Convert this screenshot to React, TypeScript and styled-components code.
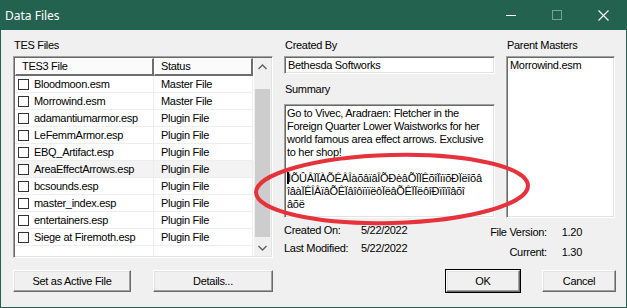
import styled, { createGlobalStyle } from "styled-components";

const GREEN = "#23624f";

const GlobalStyle = createGlobalStyle`
  body {
    margin: 0;
    background: #fff;
  }
  * {
    box-sizing: border-box;
  }
`;

type EspFile = { name: string; status: string; hover?: boolean };

const files: EspFile[] = [
  { name: "Bloodmoon.esm", status: "Master File" },
  { name: "Morrowind.esm", status: "Master File" },
  { name: "adamantiumarmor.esp", status: "Plugin File" },
  { name: "LeFemmArmor.esp", status: "Plugin File" },
  { name: "EBQ_Artifact.esp", status: "Plugin File" },
  { name: "AreaEffectArrows.esp", status: "Plugin File", hover: true },
  { name: "bcsounds.esp", status: "Plugin File" },
  { name: "master_index.esp", status: "Plugin File" },
  { name: "entertainers.esp", status: "Plugin File" },
  { name: "Siege at Firemoth.esp", status: "Plugin File" },
];

const summary =
  "Go to Vivec, Aradraen: Fletcher in the\n" +
  "Foreign Quarter Lower Waistworks for her\n" +
  "world famous area effect arrows. Exclusive\n" +
  "to her shop!\n\n";

const garbled =
  "ÌÕÛÂÏÏÀÕÊÂÎàõâïâÎÕÐèâÕÏÏÊõîÏïïõÐÏëîõâ\n" +
  "îâàÏÊÎÂïâÕÊÏâîôïïïëôÏëâÕÊÏÏëôîÐïîïîâõî\n" +
  "âõë";

function App() {
  return (
    <>
      <GlobalStyle />
      <Window>
        <TitleBar>
          <Title>Data Files</Title>
          <Controls>
            <ControlButton>
              <svg width="10" height="10" viewBox="0 0 10 10">
                <line x1="0" y1="5.5" x2="10" y2="5.5" stroke="#fff" strokeWidth="1" />
              </svg>
            </ControlButton>
            <ControlButton $disabled>
              <svg width="10" height="10" viewBox="0 0 10 10">
                <rect x="0.5" y="0.5" width="9" height="9" fill="none" stroke="#fff" strokeWidth="1" />
              </svg>
            </ControlButton>
            <ControlButton>
              <svg width="11" height="11" viewBox="0 0 11 11">
                <path d="M0.5 0.5 L10.5 10.5 M10.5 0.5 L0.5 10.5" stroke="#fff" strokeWidth="1.1" />
              </svg>
            </ControlButton>
          </Controls>
        </TitleBar>

        <Body>
          <Panels>
            <Label>TES Files</Label>
            <Label>Created By</Label>
            <Label>Parent Masters</Label>

            <ListBox>
              <ListTable>
                <HeaderRow>
                  <HeaderCell>TES3 File</HeaderCell>
                  <HeaderCell>Status</HeaderCell>
                </HeaderRow>
                {files.map((f) => (
                  <Row key={f.name} $hover={f.hover}>
                    <NameCell>
                      <Checkbox />
                      {f.name}
                    </NameCell>
                    <StatusCell>{f.status}</StatusCell>
                  </Row>
                ))}
                <Row>
                  <NameCell />
                  <StatusCell />
                </Row>
              </ListTable>
              <Scrollbar>
                <ScrollArrow>
                  <svg width="9" height="6" viewBox="0 0 9 6">
                    <polyline points="0.5,5 4.5,1 8.5,5" fill="none" stroke="#606060" strokeWidth="1.4" />
                  </svg>
                </ScrollArrow>
                <Track>
                  <Thumb />
                </Track>
                <ScrollArrow>
                  <svg width="9" height="6" viewBox="0 0 9 6">
                    <polyline points="0.5,1 4.5,5 8.5,1" fill="none" stroke="#606060" strokeWidth="1.4" />
                  </svg>
                </ScrollArrow>
              </Scrollbar>
            </ListBox>

            <MiddleStack>
              <TextField>Bethesda Softworks</TextField>
              <SubLabel>Summary</SubLabel>
              <SummaryBox>
                {summary}
                <Caret />
                {garbled}
              </SummaryBox>
            </MiddleStack>

            <MastersBox>Morrowind.esm</MastersBox>

            <InfoRow>
              <DateGrid>
                <span>Created On:</span>
                <span>5/22/2022</span>
                <span>Last Modified:</span>
                <span>5/22/2022</span>
              </DateGrid>
              <VersionGrid>
                <VersionLabel>File Version:</VersionLabel>
                <span>1.20</span>
                <VersionLabel>Current:</VersionLabel>
                <span>1.30</span>
              </VersionGrid>
            </InfoRow>
          </Panels>

          <ButtonBar>
            <Button $width={118}>Set as Active File</Button>
            <Button $width={120}>Details...</Button>
            <Spacer />
            <Button $width={74} $default>
              OK
            </Button>
            <Button $width={74}>Cancel</Button>
          </ButtonBar>
        </Body>

        {/* red marker drawn over the screenshot */}
        <Annotation viewBox="0 0 627 308">
          <ellipse
            cx="391"
            cy="189"
            rx="136"
            ry="34"
            transform="rotate(-1.5 391 189)"
            fill="none"
            stroke="#e5323b"
            strokeWidth="4"
          />
        </Annotation>
      </Window>
    </>
  );
}

export default App;

const Window = styled.div`
  position: relative;
  width: 627px;
  height: 308px;
  border: 1px solid ${GREEN};
  border-top: none;
  display: flex;
  flex-direction: column;
  background: #f0f0f0;
  font-family: "Liberation Sans", Arial, sans-serif;
  font-size: 11px;
  letter-spacing: -0.3px;
  color: #000;
  overflow: hidden;
`;

const TitleBar = styled.div`
  height: 30px;
  flex: none;
  display: flex;
  align-items: center;
  background: ${GREEN};
  color: #fff;
  padding-left: 4px;
`;

const Title = styled.div`
  flex: 1;
  font-family: "Noto Sans", "Liberation Sans", sans-serif;
  font-size: 12px;
  letter-spacing: 0;
`;

const Controls = styled.div`
  display: flex;
  height: 100%;
`;

const ControlButton = styled.div<{ $disabled?: boolean }>`
  width: 46px;
  height: 100%;
  display: flex;
  align-items: center;
  justify-content: center;
  opacity: ${(p) => (p.$disabled ? 0.4 : 1)};
`;

const Body = styled.div`
  flex: 1;
  display: flex;
  flex-direction: column;
  padding: 9px 10px 0 12px;
`;

const Panels = styled.div`
  display: grid;
  grid-template-columns: 260px 211px 109px;
  grid-template-rows: 13px 162px 36px;
  column-gap: 11px;
  row-gap: 4px;
`;

const Label = styled.div`
  line-height: 13px;
  padding-left: 1px;
`;

const sunken = `
  border: 1px solid;
  border-color: #a0a0a0 #ffffff #ffffff #a0a0a0;
  box-shadow: inset 1px 1px #696969, inset -1px -1px #e3e3e3;
  background: #fff;
`;

const ListBox = styled.div`
  ${sunken}
  grid-row: 2 / 4;
  grid-column: 1;
  display: flex;
  padding: 1px;
  overflow: hidden;
`;

const ListTable = styled.div`
  flex: 1;
  display: flex;
  flex-direction: column;
  overflow: hidden;
`;

const HeaderRow = styled.div`
  display: grid;
  grid-template-columns: 139px 99px;
  height: 18px;
  flex: none;
`;

const HeaderCell = styled.div`
  background: #fbfbfb;
  border-top: 1px solid #fff;
  border-left: 1px solid #fff;
  border-right: 2px solid #6d6d6d;
  border-bottom: 2px solid #6d6d6d;
  padding-left: 6px;
  line-height: 15px;
`;

const Row = styled.div<{ $hover?: boolean }>`
  display: grid;
  grid-template-columns: 139px 99px;
  height: 17px;
  flex: none;
  background: ${(p) => (p.$hover ? "#f3f3f3" : "#fff")};
`;

const NameCell = styled.div`
  display: flex;
  align-items: center;
  gap: 5px;
  padding-left: 3px;
  border-right: 1px solid #ededed;
  border-bottom: 1px solid #ededed;
  white-space: nowrap;
`;

const StatusCell = styled.div`
  display: flex;
  align-items: center;
  padding-left: 7px;
  border-right: 1px solid #ededed;
  border-bottom: 1px solid #ededed;
`;

const Checkbox = styled.span`
  width: 11px;
  height: 11px;
  flex: none;
  border: 1px solid #333;
  background: #fff;
`;

const Scrollbar = styled.div`
  width: 17px;
  flex: none;
  display: flex;
  flex-direction: column;
  background: #f0f0f0;
`;

const ScrollArrow = styled.div`
  height: 17px;
  flex: none;
  display: flex;
  align-items: center;
  justify-content: center;
`;

const Track = styled.div`
  flex: 1;
  padding: 14px 1px 0;
`;

const Thumb = styled.div`
  height: 148px;
  background: #cdcdcd;
`;

const MiddleStack = styled.div`
  grid-row: 2;
  grid-column: 2;
  display: flex;
  flex-direction: column;
`;

const TextField = styled.div`
  ${sunken}
  height: 18px;
  flex: none;
  padding: 0 3px;
  line-height: 16px;
  white-space: nowrap;
`;

const SubLabel = styled(Label)`
  margin-top: 9px;
`;

const SummaryBox = styled.div`
  ${sunken}
  flex: 1;
  margin-top: 8px;
  padding: 2px 2px;
  line-height: 13px;
  white-space: pre;
  overflow: hidden;
`;

const Caret = styled.span`
  display: inline-block;
  width: 2px;
  height: 12px;
  margin-right: -1px;
  vertical-align: -2px;
  background: #000;
`;

const MastersBox = styled.div`
  ${sunken}
  grid-row: 2;
  grid-column: 3;
  padding: 1px 3px;
  line-height: 15px;
`;

const InfoRow = styled.div`
  grid-row: 3;
  grid-column: 2 / 4;
  display: flex;
  justify-content: space-between;
  align-items: flex-start;
  padding-top: 2px;
  line-height: 13px;
`;

const DateGrid = styled.div`
  display: grid;
  grid-template-columns: 77px auto;
  row-gap: 5px;
`;

const VersionGrid = styled.div`
  display: grid;
  grid-template-columns: auto auto;
  column-gap: 15px;
  row-gap: 7px;
  padding-top: 2px;
  margin-right: 33px;
`;

const VersionLabel = styled.span`
  justify-self: end;
`;

const ButtonBar = styled.div`
  display: flex;
  margin-top: 12px;
  gap: 22px;
`;

const Spacer = styled.div`
  flex: 1;
  margin-right: -13px;
`;

const Button = styled.div<{ $width: number; $default?: boolean }>`
  width: ${(p) => p.$width}px;
  height: 22px;
  display: flex;
  align-items: center;
  justify-content: center;
  background: #f0f0f0;
  border: 1px solid;
  border-color: #fff #696969 #696969 #fff;
  box-shadow: inset -1px -1px #a0a0a0, inset 1px 1px #e3e3e3;
  outline: ${(p) => (p.$default ? "1px solid #000" : "none")};
`;

const Annotation = styled.svg`
  position: absolute;
  left: 0;
  top: 0;
  width: 627px;
  height: 308px;
  pointer-events: none;
`;
